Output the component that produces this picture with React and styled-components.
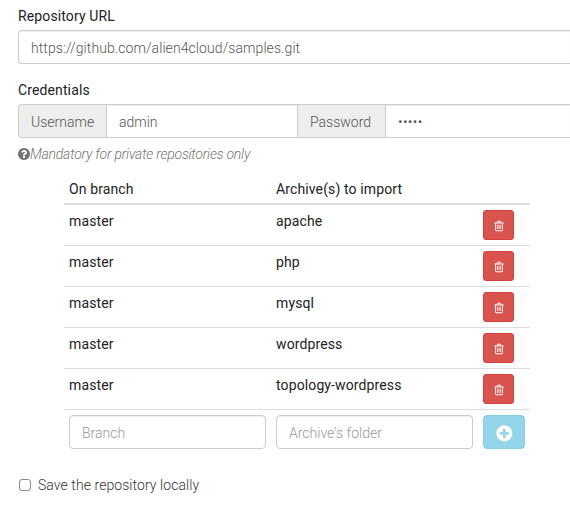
import React, { useState } from "react";
import styled, { createGlobalStyle, css } from "styled-components";

const GlobalStyle = createGlobalStyle`
  *, *::before, *::after { box-sizing: border-box; }
  html, body { overflow: hidden; }
  body {
    margin: 0;
    background: #fff;
    color: #333;
    font: 300 14px/20px Roboto, sans-serif;
  }
`;

const Form = styled.form`
  height: 506px;
  padding: 6px 0 0 18px;
  overflow: hidden;
`;

const Field = styled.div`
  margin-bottom: ${(p) => p.$gap}px;
`;

const Label = styled.label`
  display: block;
  height: 20px;
  margin-bottom: 4px;
  font-weight: 400;
  letter-spacing: 0.12px;
  color: #222;
`;

const Input = styled.input`
  display: block;
  width: 100%;
  min-width: 0;
  height: 34px;
  padding: 7px 12px 5px;
  border: 1px solid #ccc;
  border-radius: 4px;
  background: #fff;
  color: #555;
  font: inherit;
  letter-spacing: ${(p) => p.$tracking || 0}px;
  box-shadow: inset 0 1px 1px rgba(0, 0, 0, 0.075);
  outline: none;
  &::placeholder { color: #999; opacity: 1; }
`;

const UrlInput = styled(Input)`
  border-right: 0;
  border-radius: 4px 0 0 4px;
`;

const InputGroup = styled.div`
  display: flex;
  height: 34px;
  ${Input} { border-radius: 0; }
`;

const UserInput = styled(Input)`
  flex: none;
  width: 192px;
`;

const PasswordInput = styled(Input)`
  border-right: 0;
`;

const Addon = styled.span`
  flex: none;
  width: ${(p) => p.$width}px;
  padding: 7px 0 5px 12px;
  border: 1px solid #ccc;
  border-width: 1px 0;
  background: #eee;
  color: #555;
  ${(p) => p.$first && css`
    border-left-width: 1px;
    border-radius: 4px 0 0 4px;
  `}
`;

const Help = styled.p`
  display: flex;
  align-items: center;
  height: 20px;
  margin: 6px 0 9px;
  color: #737373;
  font-style: italic;
  letter-spacing: -0.235px;
`;

const Icon = styled.svg`
  display: block;
  flex: none;
  width: ${(p) => p.$size}px;
  height: ${(p) => p.$size}px;
  fill: currentColor;
`;

const HelpIcon = styled(Icon)`
  margin: 0 -1px;
`;

const Table = styled.div`
  width: 466px;
  margin-left: 46px;
`;

const Row = styled.div`
  display: grid;
  grid-template-columns: 197px 197px 42px;
  column-gap: 10px;
  padding: 5px;
  border-top: 1px solid #ddd;
  font-weight: 400;
  letter-spacing: 0.12px;
  color: #222;
`;

const HeadRow = styled(Row)`
  height: 32px;
  border-top: 0;
  border-bottom: 2px solid #ddd;
  & + ${Row} { border-top: 0; }
`;

const EntryRow = styled(Row)`
  font-weight: 300;
`;

const Cell = styled.span`
  height: 20px;
  padding-top: 1px;
`;

const Button = styled.button`
  display: flex;
  align-items: center;
  justify-content: center;
  padding: 0;
  color: #fff;
`;

const DeleteButton = styled(Button)`
  width: 31px;
  height: 30px;
  padding-top: 1px;
  border: 1px solid #d43f3a;
  border-radius: 3px;
  background: #d9534f;
`;

const AddButton = styled(Button)`
  width: 42px;
  height: 34px;
  padding-top: 2px;
  border: 1px solid #46b8da;
  border-radius: 4px;
  background: #5bc0de;
  opacity: 0.65;
`;

const CheckLabel = styled.label`
  display: flex;
  align-items: center;
  gap: 7px;
  height: 20px;
  margin-top: 21px;
  letter-spacing: 0.07px;
`;

const Checkbox = styled.input`
  appearance: none;
  width: 12px;
  height: 12px;
  margin: 0 0 0 1px;
  border: 1px solid #8a8680;
  border-radius: 3px;
  background: #fff;
  &:checked { background: #555; }
`;

const PLUS =
  "M1344 960v-128q0-26-19-45t-45-19h-256v-256q0-26-19-45t-45-19h-128q-26 0-45 19t-19 45v256h-256q-26 0-45 19t-19 45v128q0 26 19 45t45 19h256v256q0 26 19 45t45 19h128q26 0 45-19t19-45v-256h256q26 0 45-19t19-45zm320-64q0 209-103 385.5t-279.5 279.5-385.5 103-385.5-103-279.5-279.5-103-385.5 103-385.5 279.5-279.5 385.5-103 385.5 103 279.5 279.5 103 385.5z";
const QUESTION =
  "M1024 1376v-192q0-14-9-23t-23-9h-192q-14 0-23 9t-9 23v192q0 14 9 23t23 9h192q14 0 23-9t9-23zm256-672q0-88-55.5-163t-138.5-116-170-41q-243 0-371 213-15 24 8 42l132 100q7 6 19 6 16 0 25-12 53-68 86-92 34-24 86-24 48 0 85.5 26t37.5 59q0 38-20 61t-68 45q-63 28-115.5 86.5t-52.5 125.5v36q0 14 9 23t23 9h192q14 0 23-9t9-23q0-19 21.5-49.5t54.5-49.5q32-18 49-28.5t46-35 44.5-48 28-60.5 12.5-81zm384 192q0 209-103 385.5t-279.5 279.5-385.5 103-385.5-103-279.5-279.5-103-385.5 103-385.5 279.5-279.5 385.5-103 385.5 103 279.5 279.5 103 385.5z";
const TRASH =
  "M704 736v576q0 14-9 23t-23 9h-64q-14 0-23-9t-9-23v-576q0-14 9-23t23-9h64q14 0 23 9t9 23zm256 0v576q0 14-9 23t-23 9h-64q-14 0-23-9t-9-23v-576q0-14 9-23t23-9h64q14 0 23 9t9 23zm256 0v576q0 14-9 23t-23 9h-64q-14 0-23-9t-9-23v-576q0-14 9-23t23-9h64q14 0 23 9t9 23zm128 724v-948h-896v948q0 22 7 40.5t14.5 27 10.5 8.5h832q3 0 10.5-8.5t14.5-27 7-40.5zm-672-1076h448l-48-117q-7-9-17-11h-317q-10 2-17 11zm928 32v64q0 14-9 23t-23 9h-96v948q0 83-47 143.5t-113 60.5h-832q-66 0-113-58.5t-47-141.5v-952h-96q-14 0-23-9t-9-23v-64q0-14 9-23t23-9h309l70-167q15-37 54-63t79-26h320q40 0 79 26t54 63l70 167h309q14 0 23 9t9 23z";

const ARCHIVES = ["apache", "php", "mysql", "wordpress", "topology-wordpress"];

export default function App() {
  const [archives, setArchives] = useState(ARCHIVES);
  return (
    <>
      <GlobalStyle />
      <Form>
        <Field $gap={16}>
          <Label htmlFor="url">Repository URL</Label>
          <UrlInput id="url" $tracking={0.08} defaultValue="https://github.com/alien4cloud/samples.git" />
        </Field>
        <Field $gap={0}>
          <Label htmlFor="user">Credentials</Label>
          <InputGroup>
            <Addon $first $width={88}>Username</Addon>
            <UserInput id="user" defaultValue="admin" />
            <Addon $width={87}>Password</Addon>
            <PasswordInput type="password" $tracking={0.4} defaultValue="admin" aria-label="Password" />
          </InputGroup>
          <Help>
            <HelpIcon $size={14} viewBox="0 0 1792 1792"><path d={QUESTION} /></HelpIcon>
            Mandatory for private repositories only
          </Help>
        </Field>
        <Table>
          <HeadRow>
            <Cell>On branch</Cell>
            <Cell>Archive(s) to import</Cell>
          </HeadRow>
          {archives.map((name) => (
            <Row key={name}>
              <Cell>master</Cell>
              <Cell>{name}</Cell>
              <DeleteButton
                type="button"
                aria-label="Delete"
                onClick={() => setArchives(archives.filter((a) => a !== name))}
              >
                <Icon $size={12} viewBox="0 0 1792 1792"><path d={TRASH} /></Icon>
              </DeleteButton>
            </Row>
          ))}
          <EntryRow>
            <Input placeholder="Branch" />
            <Input placeholder="Archive's folder" />
            <AddButton type="button" disabled aria-label="Add">
              <Icon $size={18.67} viewBox="0 0 1792 1792"><path d={PLUS} /></Icon>
            </AddButton>
          </EntryRow>
        </Table>
        <CheckLabel>
          <Checkbox type="checkbox" />
          Save the repository locally
        </CheckLabel>
      </Form>
    </>
  );
}
